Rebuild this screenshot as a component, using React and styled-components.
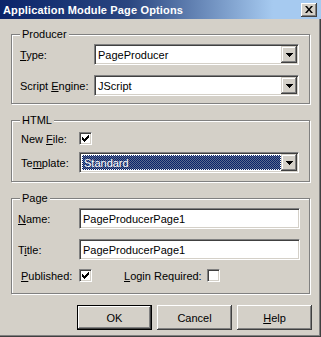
import React from 'react'
import styled, { createGlobalStyle } from 'styled-components'

const Global = createGlobalStyle`
  html, body { margin: 0; padding: 0; background: #d4d0c8; }
  body { font-family: "Liberation Sans", Arial, sans-serif; font-size: 11px; color: #000; }
`

const Window = styled.div`
  width: 321px;
  height: 337px;
  box-sizing: border-box;
  background: #d4d0c8;
  box-shadow: inset -1px -1px 0 #404040, inset -2px -2px 0 #808080;
  display: flex;
  flex-direction: column;
`

const TitleBar = styled.div`
  height: 19px;
  display: flex;
  align-items: center;
  justify-content: space-between;
  padding: 0 4px 0 3px;
  background: linear-gradient(to right, #0a246a, #2a4680 40%, #a6caf0 85%);
`

const TitleText = styled.span`
  color: #fff;
  font-weight: bold;
  font-size: 11px;
  letter-spacing: 0.15px;
`

const CloseButton = styled.div`
  width: 16px;
  height: 14px;
  box-sizing: border-box;
  background: #d4d0c8;
  box-shadow: inset -1px -1px 0 #404040, inset 1px 1px 0 #fff, inset -2px -2px 0 #808080;
  display: flex;
  align-items: center;
  justify-content: center;
`

const Body = styled.div`
  padding: 15px 0 0 11px;
  display: flex;
  flex-direction: column;
`

const Group = styled.div`
  position: relative;
  width: 299px;
  height: ${p => p.$h}px;
  margin-top: ${p => p.$mt}px;
  box-sizing: border-box;
  border: 1px solid #808080;
  box-shadow: inset 1px 1px 0 #fff, 1px 1px 0 #fff;
  padding: ${p => p.$pt}px 0 0 ${p => p.$pl}px;
  display: flex;
  flex-direction: column;
`

const Legend = styled.span`
  position: absolute;
  top: -7px;
  left: 8px;
  padding: 0 2px;
  background: #d4d0c8;
  line-height: 13px;
`

const Row = styled.div`
  display: flex;
  align-items: center;
  margin-top: ${p => p.$mt || 0}px;
`

const Label = styled.span`
  width: ${p => p.$w}px;
  flex: none;
  white-space: nowrap;
  box-sizing: border-box;
  padding-left: ${p => p.$indent || 0}px;
  margin-left: ${p => p.$ml || 0}px;
`

const U = styled.span`
  text-decoration: underline;
  text-underline-offset: 1px;
`

const Sunken = styled.div`
  height: 21px;
  width: ${p => p.$w}px;
  box-sizing: border-box;
  border: 1px solid;
  border-color: #808080 #fff #fff #808080;
  box-shadow: inset 1px 1px 0 #404040, inset -1px -1px 0 #d4d0c8;
  background: #fff;
  display: flex;
  padding: 1px;
`

const FieldText = styled.div`
  flex: 1;
  display: flex;
  align-items: center;
  padding-left: 2px;
  margin: ${p => (p.$selected ? '1px 0 1px 1px' : '0')};
  color: ${p => (p.$selected ? '#fff' : '#000')};
  background: ${p =>
    p.$selected
      ? 'repeating-conic-gradient(#0a246a 0 25%, #59688e 0 50%) 0 0 / 2px 2px'
      : 'transparent'};
  outline: ${p => (p.$selected ? '1px dotted #fff' : 'none')};
  outline-offset: -1px;
`

const DropButton = styled.div`
  width: 16px;
  flex: none;
  background: #d4d0c8;
  box-shadow: inset -1px -1px 0 #404040, inset 1px 1px 0 #d4d0c8, inset -2px -2px 0 #808080, inset 2px 2px 0 #fff;
  display: flex;
  align-items: center;
  justify-content: center;
`

const Box = styled.div`
  width: 13px;
  height: 13px;
  flex: none;
  box-sizing: border-box;
  border: 1px solid;
  border-color: #808080 #fff #fff #808080;
  box-shadow: inset 1px 1px 0 #404040, inset -1px -1px 0 #d4d0c8;
  background: #fff;
  display: flex;
  align-items: center;
  justify-content: center;
`

const ButtonRow = styled.div`
  display: flex;
  justify-content: flex-end;
  gap: 5px;
  padding: 11px 9px 0 0;
`

const Button = styled.div`
  width: 75px;
  height: 25px;
  box-sizing: border-box;
  background: #d4d0c8;
  display: flex;
  align-items: center;
  justify-content: center;
  border: ${p => (p.$default ? '1px solid #000' : 'none')};
  box-shadow: inset -1px -1px 0 #404040, inset 1px 1px 0 #fff, inset -2px -2px 0 #808080;
`

const Arrow = () => (
  <svg width="7" height="4" viewBox="0 0 7 4">
    <path d="M0 0h7v1H0zM1 1h5v1H1zM2 2h3v1H2zM3 3h1v1H3z" fill="#000" />
  </svg>
)

const Check = () => (
  <svg width="7" height="7" viewBox="0 0 7 7">
    <path d="M6 0h1v3H6zM5 1h1v3H5zM4 2h1v3H4zM3 3h1v3H3zM2 4h1v3H2zM1 3h1v3H1zM0 2h1v3H0z" fill="#000" />
  </svg>
)

const CloseX = () => (
  <svg width="8" height="7" viewBox="0 0 8 7">
    <path d="M0 0h2l2 2.5L6 0h2L5 3.5 8 7H6L4 4.5 2 7H0l3-3.5z" fill="#000" />
  </svg>
)

const Combo = ({ w, value, selected }) => (
  <Sunken $w={w}>
    <FieldText $selected={selected}>{value}</FieldText>
    <DropButton>
      <Arrow />
    </DropButton>
  </Sunken>
)

const CheckBox = ({ checked }) => <Box>{checked && <Check />}</Box>

export default function App() {
  return (
    <>
      <Global />
      <Window>
        <TitleBar>
          <TitleText>Application Module Page Options</TitleText>
          <CloseButton>
            <CloseX />
          </CloseButton>
        </TitleBar>
        <Body>
          <Group $h={70} $mt={0} $pt={9} $pl={8}>
            <Legend>Producer</Legend>
            <Row>
              <Label $w={74}>
                <U>T</U>ype:
              </Label>
              <Combo w={205} value="PageProducer" />
            </Row>
            <Row $mt={10}>
              <Label $w={74}>
                Script <U>E</U>ngine:
              </Label>
              <Combo w={205} value="JScript" />
            </Row>
          </Group>

          <Group $h={62} $mt={16} $pt={11} $pl={9}>
            <Legend>HTML</Legend>
            <Row>
              <Label $w={58}>
                New <U>F</U>ile:
              </Label>
              <CheckBox checked />
            </Row>
            <Row $mt={7}>
              <Label $w={58}>
                Te<U>m</U>plate:
              </Label>
              <Combo w={220} value="Standard" selected />
            </Row>
          </Group>

          <Group $h={96} $mt={16} $pt={9} $pl={6}>
            <Legend>Page</Legend>
            <Row>
              <Label $w={61}>
                <U>N</U>ame:
              </Label>
              <Sunken $w={221}>
                <FieldText>PageProducerPage1</FieldText>
              </Sunken>
            </Row>
            <Row $mt={10}>
              <Label $w={61}>
                T<U>i</U>tle:
              </Label>
              <Sunken $w={221}>
                <FieldText>PageProducerPage1</FieldText>
              </Sunken>
            </Row>
            <Row $mt={9}>
              <Label $w={61} $indent={3}>
                <U>P</U>ublished:
              </Label>
              <CheckBox checked />
              <Label $w={83} $ml={32}>
                <U>L</U>ogin Required:
              </Label>
              <CheckBox />
            </Row>
          </Group>
        </Body>
        <ButtonRow>
          <Button $default>OK</Button>
          <Button>Cancel</Button>
          <Button>
            <span>
              <U>H</U>elp
            </span>
          </Button>
        </ButtonRow>
      </Window>
    </>
  )
}
